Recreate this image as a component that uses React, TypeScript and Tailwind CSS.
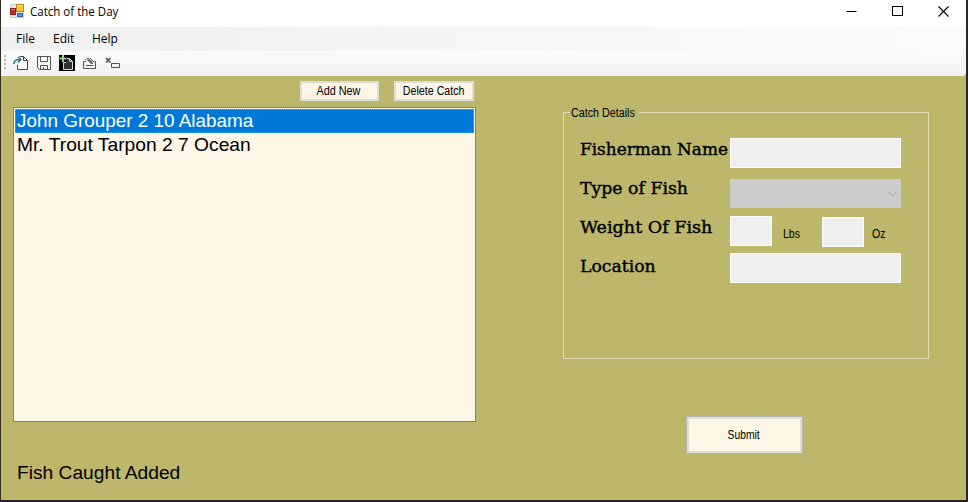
import React from "react";

function AppIcon() {
  return (
    <svg width="14" height="14" viewBox="0 0 14 14" className="shrink-0">
      <rect x="0.5" y="0.5" width="13" height="13" fill="#e4e7ec" stroke="#c9cdd5" />
      <rect x="0.5" y="4.5" width="5" height="6" fill="#c02f22" stroke="#8a2018" />
      <rect x="6.5" y="0.5" width="7" height="7" fill="#f6c438" stroke="#b98a1a" />
      <rect x="7.5" y="9.5" width="5" height="3" fill="#5c8be0" stroke="#3a5fae" />
      <path d="M1 5.5h4" stroke="#e27a6c" />
      <path d="M7 1.5h6" stroke="#fde48c" />
    </svg>
  );
}

function OpenIcon() {
  return (
    <svg width="16" height="16" viewBox="0 0 16 16" fill="none">
      <path d="M6.500 1.500H10.500L14.500 5.500V14.500H4.500V10" stroke="#424242" />
      <path d="M10.500 1.500V5.500H14.500" stroke="#424242" />
      <path d="M1 9C0.500 5.500 3.500 4.500 7 4.500" stroke="#28709e" strokeWidth="1.500" />
      <path d="M5 2L7.800 4.500L5 7.500" stroke="#28709e" strokeWidth="1.500" />
    </svg>
  );
}

function SaveIcon() {
  return (
    <svg width="16" height="16" viewBox="0 0 16 16" fill="none" stroke="#505050">
      <path d="M1.500 1.500H14.500V14.500H3.500L1.500 12.500Z" />
      <path d="M4.500 1.500V6.500H11.500V1.500" />
      <path d="M4.500 14.500V10.500H11.500V14.500M7.500 12V14.500" />
    </svg>
  );
}

function AddIcon() {
  return (
    <svg width="16" height="16" viewBox="0 0 16 16" fill="none">
      <rect width="16" height="16" fill="#000" />
      <path d="M7 3.500H10.500L13.500 6.500V14.500H4.500V7.500H7Z" fill="#303030" stroke="#d4d4d4" />
      <path d="M10.500 3.500V6.500H13.500" stroke="#d4d4d4" />
      <rect x="1" y="0" width="7" height="7" fill="#000" />
      <path d="M4 0V7M0.500 3.500H7.500" stroke="#8fd38b" strokeWidth="2" />
    </svg>
  );
}

function EditIcon() {
  return (
    <svg width="16" height="16" viewBox="0 0 16 16" fill="none" stroke="#505050">
      <path d="M4 6.500H1.500V13.500H13.500V6.500H12.500M4 10.500H11.500" />
      <path d="M5 5L6.500 3L11 7.500V9H9Z" fill="#666" stroke="none" />
      <path d="M3.500 5L6 2.500M8 3L12 7" />
    </svg>
  );
}

function DeleteIcon() {
  return (
    <svg width="16" height="16" viewBox="0 0 16 16" fill="none" stroke="#505050">
      <path d="M1 3L5.500 7.500M5.500 3L1 7.500" strokeWidth="1.600" />
      <path d="M6.500 8.500H14.500V12.500H6.500Z" />
    </svg>
  );
}

function TitleBar() {
  return (
    <header className="flex h-[27px] shrink-0 items-start bg-white pl-[9px]">
      <div className="pt-1"><AppIcon /></div>
      <span className="ml-[6px] mt-[3px] w-[100px] origin-left scale-x-[0.96] whitespace-nowrap font-['Open_Sans','Noto_Sans',sans-serif] text-[12px] leading-[17px] text-black">Catch of the Day</span>
      <div className="ml-auto flex gap-[35px] pr-[17px] pt-[5px]">
        <svg width="11" height="12" viewBox="0 0 11 12"><path d="M0.500 6.500h10" stroke="#000" /></svg>
        <svg width="11" height="12" viewBox="0 0 11 12" fill="none"><rect x="0.500" y="1.500" width="10" height="9" stroke="#000" /></svg>
        <svg width="11" height="12" viewBox="0 0 11 12"><path d="M0.500 1.500l10 10M10.500 1.500l-10 10" stroke="#000" strokeWidth="1.100" /></svg>
      </div>
    </header>
  );
}

function MenuBar() {
  return (
    <nav className="flex h-6 shrink-0 items-center bg-linear-to-r from-[#f0f0f0] to-[#fbfbfb] pl-[15px] font-['Open_Sans','Noto_Sans',sans-serif] text-[12px] leading-none text-black">
      <span className="w-[37px]">File</span>
      <span className="w-[39px]">Edit</span>
      <span>Help</span>
    </nav>
  );
}

function ToolBar() {
  return (
    <div className="flex h-[25px] shrink-0 items-start rounded-br-sm bg-linear-to-b from-[#fbfbfb] to-[#f2f2f2] pl-[3px] pt-1">
      <svg width="2" height="14" viewBox="0 0 2 14" className="mr-[7px]">
        <path d="M1 0v14" stroke="#b4b7bd" strokeWidth="2" strokeDasharray="2 2" />
      </svg>
      <div className="flex gap-[7px]">
        <OpenIcon /><SaveIcon /><AddIcon /><EditIcon /><DeleteIcon />
      </div>
    </div>
  );
}

function SmallButton({ label, className, textClass }: { label: string; className: string; textClass: string }) {
  return (
    <button className={`flex items-center justify-center border-2 border-[#dddddb] bg-[#fdf5e6] text-[12px] leading-none whitespace-nowrap text-black ${className}`}>
      <span className={textClass}>{label}</span>
    </button>
  );
}

function Field({ className }: { className: string }) {
  return <input disabled className={`block shrink-0 border border-white bg-[#efefef] ${className}`} />;
}

const slab = "block origin-left whitespace-nowrap font-['DejaVu_Serif',serif] text-[17.5px] leading-[22px] text-black [-webkit-text-stroke:0.4px_black]";

function CatchDetails() {
  return (
    <fieldset className="h-[253px] w-[366px] border border-[#dfdcba] pl-4">
      <legend className="-ml-[10px] h-[12px] w-[69px] pl-[1px] text-[12px] leading-[14px] whitespace-nowrap">
        <span className="inline-block origin-left scale-x-[0.895]">Catch Details</span>
      </legend>
      <div className="flex h-[42px] pt-5">
        <div className="w-[150px] shrink-0"><span className={`${slab} scale-x-[0.965]`}>Fisherman Name</span></div>
        <Field className="h-[30px] w-[171px]" />
      </div>
      <div className="flex h-[38px] pt-[19px]">
        <div className="-mt-[2px] w-[150px] shrink-0"><span className={`${slab} scale-x-[0.988]`}>Type of Fish</span></div>
        <div className="flex h-[29px] w-[171px] shrink-0 items-center justify-end bg-[#ccc] pr-1">
          <svg width="9" height="6" viewBox="0 0 9 6" fill="none"><path d="M0.500 1l4 4l4-4" stroke="#a0a0a0" /></svg>
        </div>
      </div>
      <div className="flex h-[37px] pt-[18px]">
        <div className="w-[150px] shrink-0"><span className={`${slab} scale-x-[1.003]`}>Weight Of Fish</span></div>
        <Field className="h-[30px] w-[42px]" />
        <span className="ml-[11px] mt-[11px] w-[39px] text-[12px] leading-[14px]"><span className="inline-block origin-left scale-x-[0.88]">Lbs</span></span>
        <Field className="mt-px h-[30px] w-[42px]" />
        <span className="ml-2 mt-[11px] text-[12px] leading-[14px]"><span className="inline-block origin-left scale-x-[0.88]">Oz</span></span>
      </div>
      <div className="flex h-[37px] pt-[18px]">
        <div className="mt-[2px] w-[150px] shrink-0"><span className={`${slab} scale-x-[0.985]`}>Location</span></div>
        <Field className="h-[30px] w-[171px]" />
      </div>
    </fieldset>
  );
}

export default function App() {
  return (
    <div className="flex h-[502px] w-[968px] flex-col overflow-hidden border-r-2 border-b-2 border-l border-r-[#292725] border-b-[#232323] border-l-[#2f2d20] bg-[#bdb76b] font-['Liberation_Sans',sans-serif] text-black">
      <TitleBar />
      <MenuBar />
      <ToolBar />
      <main className="flex flex-1">
        <section className="flex w-[475px] shrink-0 flex-col pl-3">
          <div className="flex h-[31px] justify-end gap-[15px] pr-[2px] pt-[5px]">
            <SmallButton label="Add New" className="h-5 w-[79px] pr-[2px]" textClass="scale-x-[0.9]" />
            <SmallButton label="Delete Catch" className="h-5 w-[80px]" textClass="scale-x-[0.89]" />
          </div>
          <div className="h-[315px] w-[463px] border border-[#7a7f83] bg-[#fdf5e6] text-[19px] leading-[24px]">
            <div className="m-px mb-0 h-[24px] border border-dotted border-[#b0957a] bg-[#0078d7] pl-px leading-[21px] text-white">
              <span className="inline-block origin-left scale-x-[0.994] whitespace-nowrap">John Grouper 2 10 Alabama</span>
            </div>
            <div className="pl-[3px]"><span className="inline-block origin-left scale-x-[1.012] whitespace-nowrap">Mr. Trout Tarpon 2 7 Ocean</span></div>
          </div>
          <p className="mt-[39px] pl-1 text-[19px] leading-6"><span className="inline-block origin-left scale-x-[1.01] whitespace-nowrap">Fish Caught Added</span></p>
        </section>
        <section className="flex flex-col pl-[87px] pt-[30px]">
          <CatchDetails />
          <SmallButton label="Submit" className="mt-[57px] ml-[123px] h-[38px] w-[117px] shadow-[inset_0_0_0_1px_#e2ded2] outline-1 -outline-offset-1 outline-[#b2b5ae] pr-0.5" textClass="scale-x-[0.86]" />
        </section>
      </main>
    </div>
  );
}
